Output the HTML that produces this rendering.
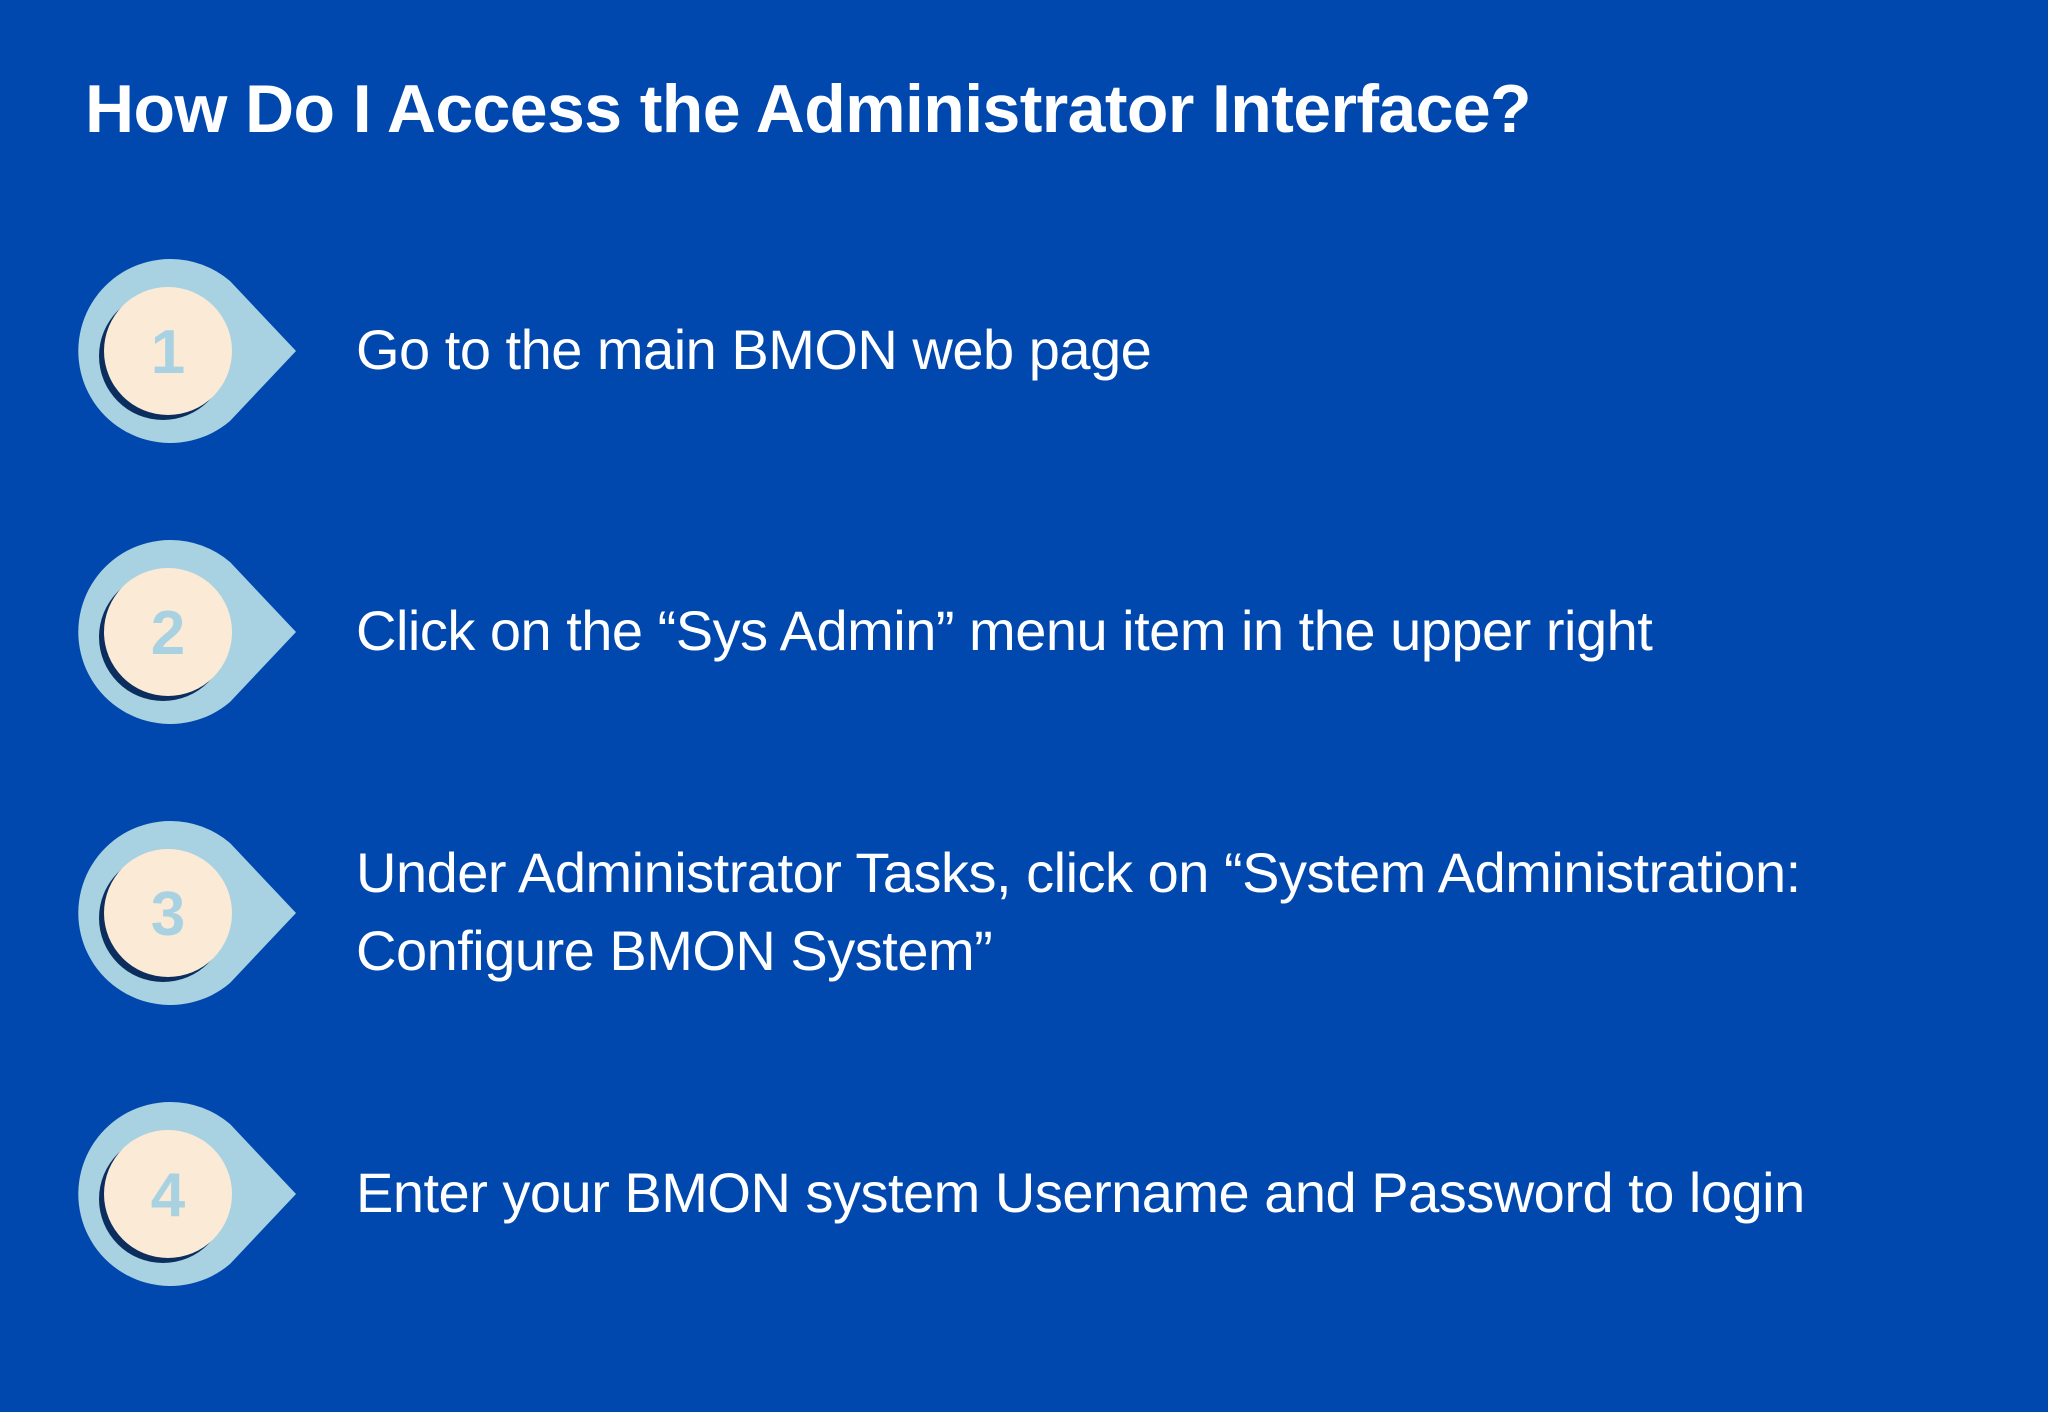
<!DOCTYPE html>
<html><head><meta charset="utf-8"><style>
html,body{margin:0;padding:0}
body{width:2048px;height:1412px;background:#0048AE;position:relative;overflow:hidden;font-family:"Liberation Sans",sans-serif;color:#fff}
h1{position:absolute;left:85px;top:69px;margin:0;font-size:68px;font-weight:bold;letter-spacing:-0.6px;line-height:80px;white-space:nowrap}
.icon{position:absolute;left:78px;width:222px;height:184px}
.t{position:absolute;left:356px;font-size:56px;line-height:78px;white-space:nowrap;letter-spacing:-0.5px}
</style></head><body>
<h1>How Do I Access the Administrator Interface?</h1>

<svg class="icon" style="top:259px" viewBox="0 0 222 184"><path d="M92 0 A92 92 0 0 1 152 22 L218 92 L152 162 A92 92 0 1 1 92 0Z" fill="#A8D2E2"/><circle cx="85" cy="97" r="64" fill="#0B2E5E"/><circle cx="90" cy="92" r="64" fill="#FBEAD5"/><text x="90" y="114" text-anchor="middle" font-family="Liberation Sans" font-weight="bold" font-size="62" fill="#A8D2E2">1</text></svg>
<div class="t" style="top:311px">Go to the main BMON web page</div>

<svg class="icon" style="top:540px" viewBox="0 0 222 184"><path d="M92 0 A92 92 0 0 1 152 22 L218 92 L152 162 A92 92 0 1 1 92 0Z" fill="#A8D2E2"/><circle cx="85" cy="97" r="64" fill="#0B2E5E"/><circle cx="90" cy="92" r="64" fill="#FBEAD5"/><text x="90" y="114" text-anchor="middle" font-family="Liberation Sans" font-weight="bold" font-size="62" fill="#A8D2E2">2</text></svg>
<div class="t" style="top:592px">Click on the “Sys Admin” menu item in the upper right</div>

<svg class="icon" style="top:821px" viewBox="0 0 222 184"><path d="M92 0 A92 92 0 0 1 152 22 L218 92 L152 162 A92 92 0 1 1 92 0Z" fill="#A8D2E2"/><circle cx="85" cy="97" r="64" fill="#0B2E5E"/><circle cx="90" cy="92" r="64" fill="#FBEAD5"/><text x="90" y="114" text-anchor="middle" font-family="Liberation Sans" font-weight="bold" font-size="62" fill="#A8D2E2">3</text></svg>
<div class="t" style="top:834px">Under Administrator Tasks, click on “System Administration:<br>Configure BMON System”</div>

<svg class="icon" style="top:1102px" viewBox="0 0 222 184"><path d="M92 0 A92 92 0 0 1 152 22 L218 92 L152 162 A92 92 0 1 1 92 0Z" fill="#A8D2E2"/><circle cx="85" cy="97" r="64" fill="#0B2E5E"/><circle cx="90" cy="92" r="64" fill="#FBEAD5"/><text x="90" y="114" text-anchor="middle" font-family="Liberation Sans" font-weight="bold" font-size="62" fill="#A8D2E2">4</text></svg>
<div class="t" style="top:1154px">Enter your BMON system Username and Password to login</div>
</body></html>
